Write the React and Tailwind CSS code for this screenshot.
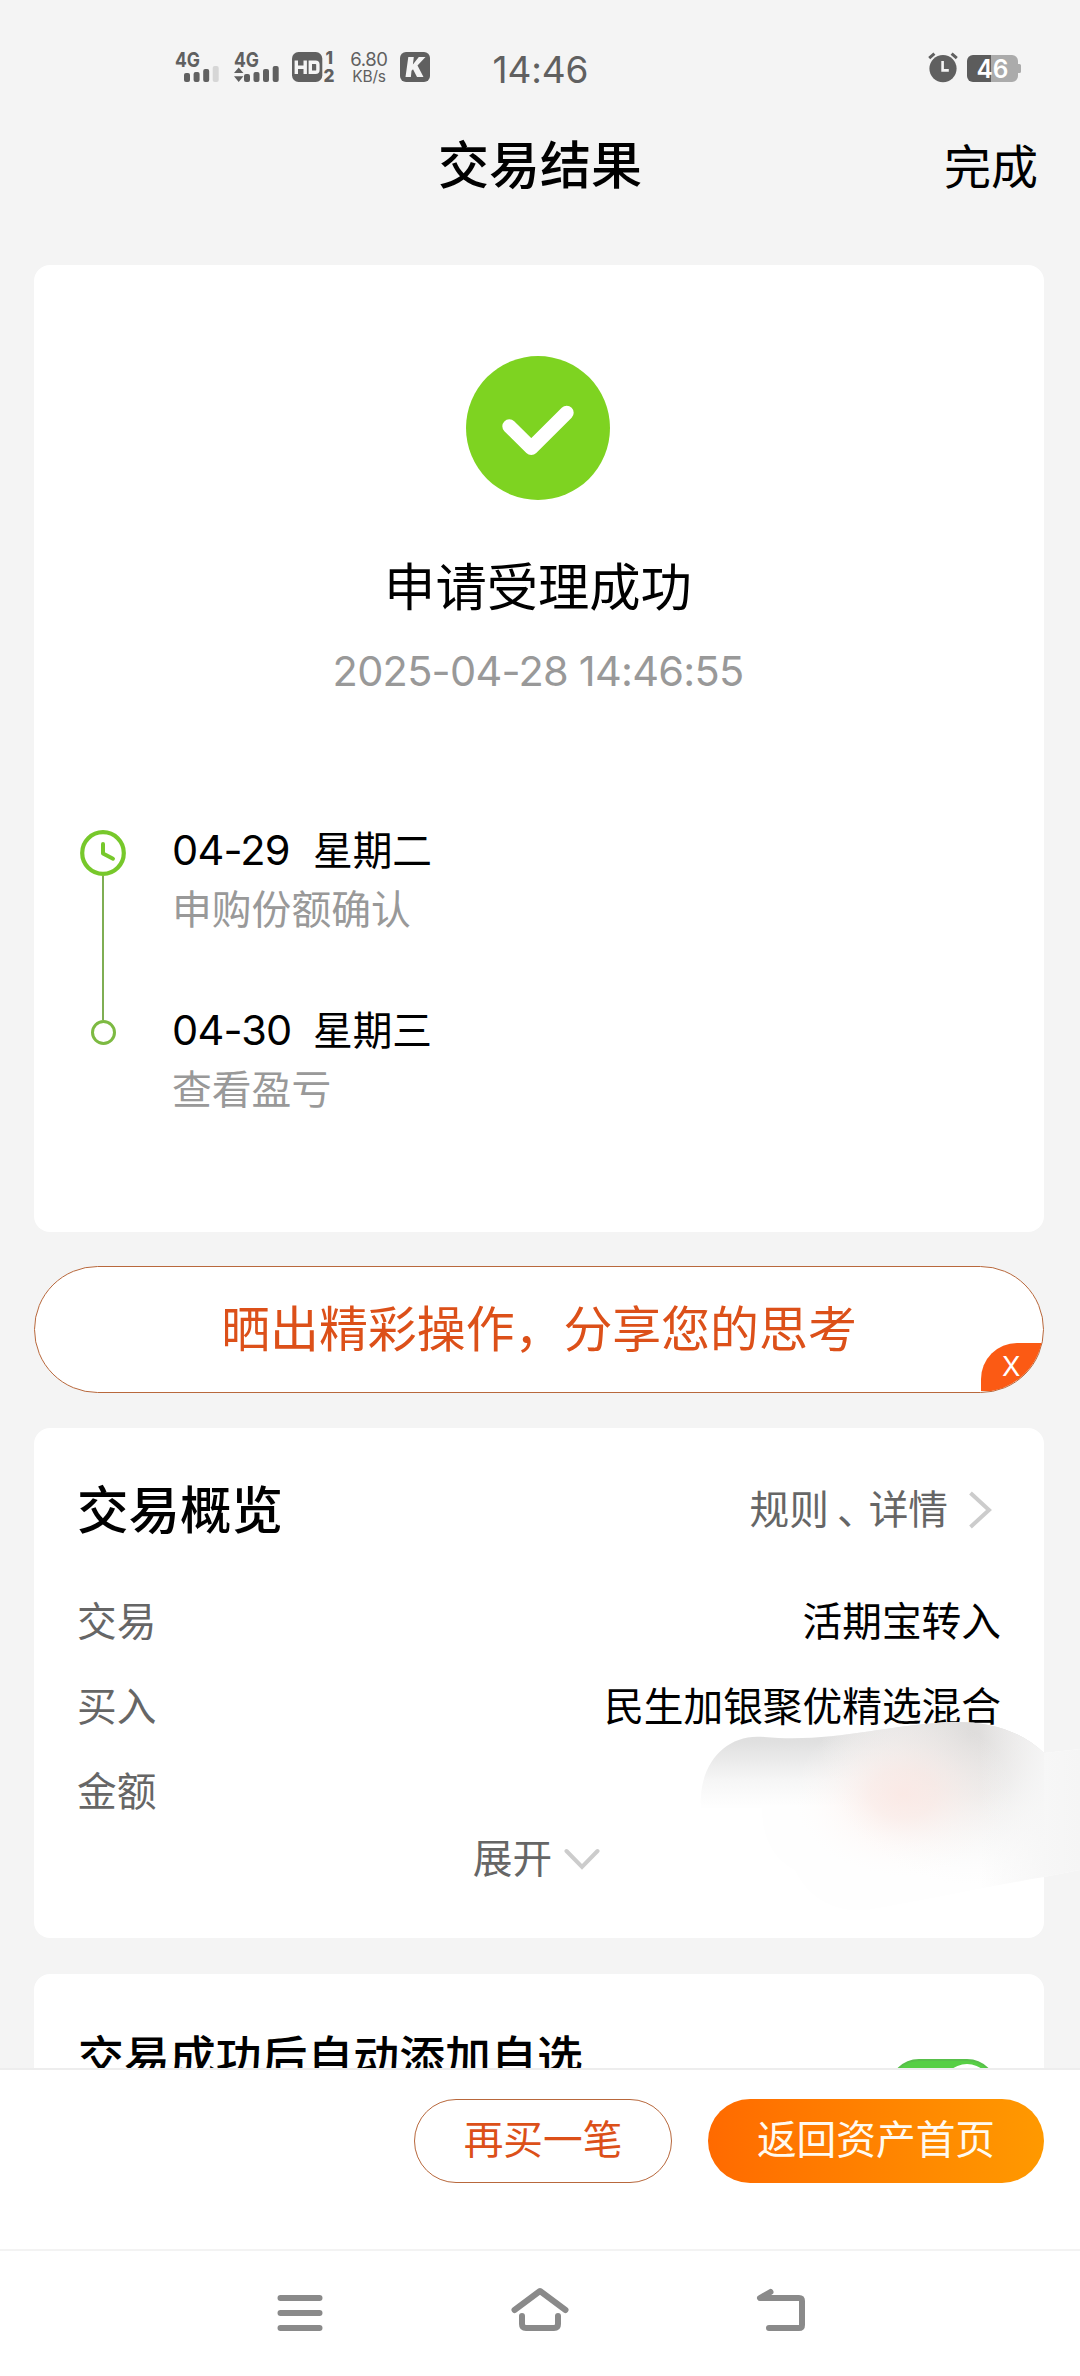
import React from "react";

const CJK = "font-['Noto_Sans_CJK_SC',sans-serif]";
const NUM = "font-['Inter','Noto_Sans_CJK_SC',sans-serif]";

function Signal({ bars, arrows, width }) {
  return (
    <svg className="overflow-visible" width={width} height="32" viewBox={`0 0 ${width} 32`} fill="#606060">
      <text x="0" y="16" fontFamily="Inter, sans-serif" fontWeight="700" fontSize="20.5" textLength="25" lengthAdjust="spacingAndGlyphs">4G</text>
      {arrows && <path d="M4.7 16.5 9.4 22H0zM4.7 31 0 25.2h9.4z" />}
      {bars.map(([x, y, light]) => (
        <rect key={x} x={x} y={y} width="6" height={31 - y} rx="2" fill={light ? "#d6d6d6" : "#606060"} />
      ))}
    </svg>
  );
}

function StatusBar() {
  return (
    <div className="flex h-[112px] shrink-0 items-start pt-[51px] pr-[58px] pl-[175px]">
      <Signal width={45} bars={[[9, 22], [18.6, 21], [28.2, 18], [37.7, 15, true]]} />
      <div className="ml-[14px]">
        <Signal width={46} arrows bars={[[10, 23], [19.5, 21], [29, 18], [38.7, 15]]} />
      </div>
      <svg className="ml-[12px] overflow-visible" width="44" height="32" viewBox="0 0 44 32">
        <rect x="0" y="1" width="30.3" height="30" rx="6.5" fill="#606060" />
        <path d="M4.3 9.5V23M13.2 9.5V23M4.3 16.3h9" stroke="#f4f4f4" strokeWidth="3.4" fill="none" />
        <path d="M18.3 11.2h5.2q2.4 0 2.4 2.4v5.3q0 2.4-2.4 2.4h-5.2z" stroke="#f4f4f4" strokeWidth="3.4" fill="none" />
        <g fontFamily="Inter, sans-serif" fontWeight="800" fill="#606060">
          <text x="33.5" y="13.2" fontSize="17">1</text>
          <text x="31.5" y="31" fontSize="17.5" textLength="11" lengthAdjust="spacingAndGlyphs">2</text>
        </g>
      </svg>
      <div className={`ml-[12px] flex w-[42px] flex-col items-center text-[#606060] ${NUM}`}>
        <span className="text-[18.5px] leading-[17px] tracking-[-0.4px]">6.80</span>
        <span className="text-[15.5px] leading-[17px] tracking-[-0.2px]">KB/s</span>
      </div>
      <svg className="ml-[10px]" width="32" height="32" viewBox="0 0 32 32">
        <rect x="0" y="1" width="30" height="30" rx="6" fill="#606060" />
        <path d="M8.3 6h5.500L12.900 13.500 18.800 6H25.500L17.500 14.600 23.500 26H17L13 18.200 11.500 19.800 10.900 26H5.500z" fill="#f4f4f4" />
      </svg>
      <div className={`ml-[60.5px] text-[37px] leading-[37px] tracking-[-0.1px] text-[#606060] ${NUM}`}>14:46</div>
      <div className="ml-auto flex items-start">
        <svg width="30" height="32" viewBox="0 0 30 32">
          <circle cx="15" cy="17.6" r="13.6" fill="#606060" />
          <path d="M14.6 10v9.4h6.2" stroke="#f4f4f4" strokeWidth="2.6" fill="none" />
          <path d="M1.2 7.2 6.4 2.6M28.8 7.2 23.6 2.6" stroke="#606060" strokeWidth="3" fill="none" />
        </svg>
        <svg className="ml-[9px]" width="55" height="32" viewBox="0 0 55 32">
          <path d="M24 4h21a6 6 0 0 1 6 6v3h1.5q1.5 0 1.5 1.5v6q0 1.5-1.5 1.5H51v3a6 6 0 0 1-6 6H24z" fill="#ababab" />
          <path d="M24 4H6a6 6 0 0 0-6 6v15a6 6 0 0 0 6 6h18z" fill="#5c5c5c" />
          <text x="9.5" y="27" fontFamily="Inter, sans-serif" fontWeight="600" fontSize="25" fill="#fff" textLength="32" lengthAdjust="spacingAndGlyphs">46</text>
        </svg>
      </div>
    </div>
  );
}

function Header() {
  return (
    <header className={`grid h-[100px] shrink-0 grid-cols-[1fr_auto_1fr] items-center text-black ${CJK}`}>
      <span />
      <h1 className="text-[51px] leading-[72px] font-medium">交易结果</h1>
      <span className="justify-self-end pt-[3px] pr-[42px] text-[47px] leading-[72px]">完成</span>
    </header>
  );
}

function TimelineItem({ date, day, label }) {
  return (
    <div>
      <div className="flex h-[60px] items-center text-black">
        <span className={`w-[141px] text-[41.5px] leading-[60px] tracking-[-0.8px] ${NUM}`}>{date}</span>
        <span className={`-mt-[5px] text-[39.7px] leading-[60px] ${CJK}`}>{day}</span>
      </div>
      <div className={`text-[39.8px] leading-[54px] text-[#999] ${CJK}`}>{label}</div>
    </div>
  );
}

function ResultCard() {
  return (
    <section className="h-[967px] shrink-0 rounded-[16px] bg-white pt-[91px]">
      <div className="flex flex-col items-center pr-[2px]">
        <svg width="144" height="144" viewBox="0 0 144 144">
          <circle cx="72" cy="72" r="72" fill="#7ed321" />
          <path d="M43.3 70.3 65.3 92 100.7 56.700" stroke="#fff" strokeWidth="14" strokeLinecap="round" strokeLinejoin="round" fill="none" />
        </svg>
        <div className={`mt-[48px] text-[51.3px] leading-[72px] text-black ${CJK}`}>申请受理成功</div>
        <div className={`mt-[21px] text-[41.5px] leading-[60px] tracking-[-0.75px] text-[#999] ${NUM}`}>2025-04-28 14:46:55</div>
      </div>
      <div className="mt-[119px] flex pl-[46px]">
        <div className="flex w-[46px] flex-col items-center pt-[10px]">
          <svg width="46" height="46" viewBox="0 0 46 46" fill="none" stroke="#77c82b">
            <circle cx="23" cy="23" r="20.8" strokeWidth="4.2" />
            <path d="M23 14v9.5l10 5.2" strokeWidth="4" strokeLinecap="round" strokeLinejoin="round" />
          </svg>
          <div className="h-[144px] w-[2px] bg-[#7fae53]" />
          <div className="size-[25px] rounded-full border-[3px] border-[#7dba42]" />
        </div>
        <div className="ml-[46px] flex flex-col gap-[66px]">
          <TimelineItem date="04-29" day="星期二" label="申购份额确认" />
          <TimelineItem date="04-30" day="星期三" label="查看盈亏" />
        </div>
      </div>
    </section>
  );
}

function SharePill() {
  return (
    <div className="relative mt-[34px] flex h-[127px] shrink-0 items-center justify-center overflow-hidden rounded-full border-[1.5px] border-[#b8683c] bg-white pb-[7px]">
      <span className={`text-[48.9px] leading-[72px] text-[#dc5019] ${CJK}`}>晒出精彩操作，分享您的思考</span>
      <div className="absolute right-0 bottom-[1px] flex h-[48px] w-[62px] items-center rounded-tl-[36px] bg-[#fb5a14] pl-[21px] font-['Inter',sans-serif] text-[27px] text-white">
        X
      </div>
    </div>
  );
}

function Row({ label, value }) {
  return (
    <div className="flex h-[85px] items-center justify-between text-[39.7px]">
      <span className="text-[#666]">{label}</span>
      <span className="text-black">{value}</span>
    </div>
  );
}

function Smudge() {
  return (
    <svg className="absolute top-[290px] left-[660px]" width="386" height="200" viewBox="694 1718 386 200">
      <defs>
        <clipPath id="blob">
          <path d="M701 1808C698 1765 725 1733 764 1737C830 1743 880 1726 950 1722C992 1721 1022 1732 1044 1753L1080 1749V1870L1044 1877C990 1886 930 1899 867 1910C835 1913 808 1898 795 1870C775 1860 762 1840 762 1808Z" />
        </clipPath>
        <clipPath id="inner">
          <rect x="694" y="1718" width="350" height="200" />
        </clipPath>
        <linearGradient id="top" x1="0" y1="1720" x2="0" y2="1806" gradientUnits="userSpaceOnUse">
          <stop offset="0" stopColor="#dcdcdc" />
          <stop offset="0.25" stopColor="#e0e0e0" />
          <stop offset="0.7" stopColor="#f6f6f6" />
          <stop offset="1" stopColor="#fefefe" />
        </linearGradient>
        <radialGradient id="side" cx="0" cy="0" r="1" gradientUnits="userSpaceOnUse" gradientTransform="translate(970 1735) scale(150 150)">
          <stop offset="0" stopColor="#dedcdb" />
          <stop offset="0.4" stopColor="#e8e6e5" stopOpacity="0.85" />
          <stop offset="1" stopColor="#fafafa" stopOpacity="0" />
        </radialGradient>
        <radialGradient id="pink" cx="0" cy="0" r="1" gradientUnits="userSpaceOnUse" gradientTransform="translate(903 1794) scale(110 82)">
          <stop offset="0" stopColor="#fbe8e4" stopOpacity="0.9" />
          <stop offset="0.3" stopColor="#fbeae6" stopOpacity="0.7" />
          <stop offset="0.65" stopColor="#fdf3f0" stopOpacity="0.3" />
          <stop offset="1" stopColor="#fffaf8" stopOpacity="0" />
        </radialGradient>
        <linearGradient id="edge" x1="980" y1="0" x2="1080" y2="0" gradientUnits="userSpaceOnUse">
          <stop offset="0" stopColor="#f5f5f5" stopOpacity="0" />
          <stop offset="0.65" stopColor="#f6f6f6" stopOpacity="0.9" />
          <stop offset="1" stopColor="#f5f5f5" />
        </linearGradient>
      </defs>
      <g clipPath="url(#blob)">
        <rect x="694" y="1718" width="386" height="200" fill="#fefefe" />
        <g clipPath="url(#inner)">
          <rect x="694" y="1718" width="350" height="90" fill="url(#top)" />
          <rect x="694" y="1718" width="350" height="200" fill="url(#side)" />
          <rect x="694" y="1718" width="350" height="200" fill="url(#pink)" />
        </g>
        <rect x="980" y="1718" width="100" height="200" fill="url(#edge)" />
      </g>
    </svg>
  );
}

function OverviewCard() {
  return (
    <section className={`relative mt-[35px] h-[510px] shrink-0 rounded-[16px] bg-white pt-[43px] pr-[43px] pl-[43px] ${CJK}`}>
      <div className="flex h-[72px] items-center">
        <h2 className="text-[51.5px] leading-[72px] font-medium text-black">交易概览</h2>
        <span className="ml-auto text-[39.7px] leading-[72px] text-[#666]">
          规则<span className="relative left-[8px]">、</span>详情
        </span>
        <svg className="mt-[6px] mr-[8px] ml-[19px]" width="26" height="40" viewBox="0 0 26 40" fill="none">
          <path d="M3.5 3 22 20 3.5 37" stroke="#ccc" strokeWidth="4" />
        </svg>
      </div>
      <div className="mt-[33px]">
        <Row label="交易" value="活期宝转入" />
        <Row label="买入" value="民生加银聚优精选混合" />
        <Row label="金额" value="" />
      </div>
      <div className="flex h-[50px] items-center justify-center pr-[5px] text-[39.7px] leading-[50px] text-[#666]">
        <span>展开</span>
        <svg className="mt-[6px] ml-[12px]" width="36" height="24" viewBox="0 0 36 24" fill="none">
          <path d="M2.5 4 18 20 33.5 4" stroke="#ccc" strokeWidth="4" strokeLinecap="round" />
        </svg>
      </div>
      <Smudge />
    </section>
  );
}

function AutoAddCard() {
  return (
    <section className={`mt-[36px] flex h-[200px] shrink-0 items-start justify-between rounded-[16px] bg-white pt-[50px] pr-[47px] pl-[44px] ${CJK}`}>
      <span className="text-[45.9px] leading-[60px] font-medium text-black">交易成功后自动添加自选</span>
      <div className="mt-[35px] flex h-[60px] w-[108px] justify-end rounded-full border-2 border-[#58bf4a] bg-[#57cf45] p-[3px]">
        <div className="size-[50px] rounded-full bg-white" />
      </div>
    </section>
  );
}

function ActionBar() {
  return (
    <div className={`flex h-[181px] shrink-0 items-start justify-end gap-[36px] border-t-2 border-[#ededed] bg-white pt-[29px] pr-[36px] text-[39.7px] ${CJK}`}>
      <button className="flex h-[84px] w-[258px] items-center justify-center rounded-full border-[1.5px] border-[#b8683c] pb-[8px] text-[#dc5019]">再买一笔</button>
      <button className="flex h-[84px] w-[336px] items-center justify-center rounded-full bg-linear-to-r from-[#ff6a00] to-[#ff9900] pb-[8px] text-[#fffaf0]">返回资产首页</button>
    </div>
  );
}

function NavBar() {
  return (
    <nav className="flex h-[127px] shrink-0 items-start justify-between border-t-2 border-[#f3f3f3] bg-white pt-[35px] pr-[274px] pl-[276px]">
      <svg width="48" height="52" viewBox="276 2286 48 52" fill="none" stroke="#8a8a8a" strokeWidth="6" strokeLinecap="round">
        <path d="M280.5 2298h39M280.5 2313h39M280.5 2328h39" />
      </svg>
      <svg width="60" height="52" viewBox="510 2286 60 52" fill="none" stroke="#8a8a8a" strokeWidth="6" strokeLinecap="round" strokeLinejoin="round">
        <path d="M514.5 2310 540 2291 565.5 2310M522 2316v8q0 4 4 4h28q4 0 4-4v-8" />
      </svg>
      <svg width="50" height="52" viewBox="755 2286 50 52" fill="none" stroke="#8a8a8a" strokeWidth="6" strokeLinecap="round" strokeLinejoin="round">
        <path d="M769.5 2292 759 2298H798q3 0 3 3v24q0 3-3 3h-30" />
      </svg>
    </nav>
  );
}

export default function App() {
  return (
    <div className="flex h-[2376px] w-[1080px] flex-col overflow-hidden bg-[#f4f4f4]">
      <StatusBar />
      <Header />
      <main className="flex min-h-0 flex-1 flex-col overflow-hidden pt-[53px] pr-[36px] pl-[34px]">
        <ResultCard />
        <SharePill />
        <OverviewCard />
        <AutoAddCard />
      </main>
      <ActionBar />
      <NavBar />
    </div>
  );
}
